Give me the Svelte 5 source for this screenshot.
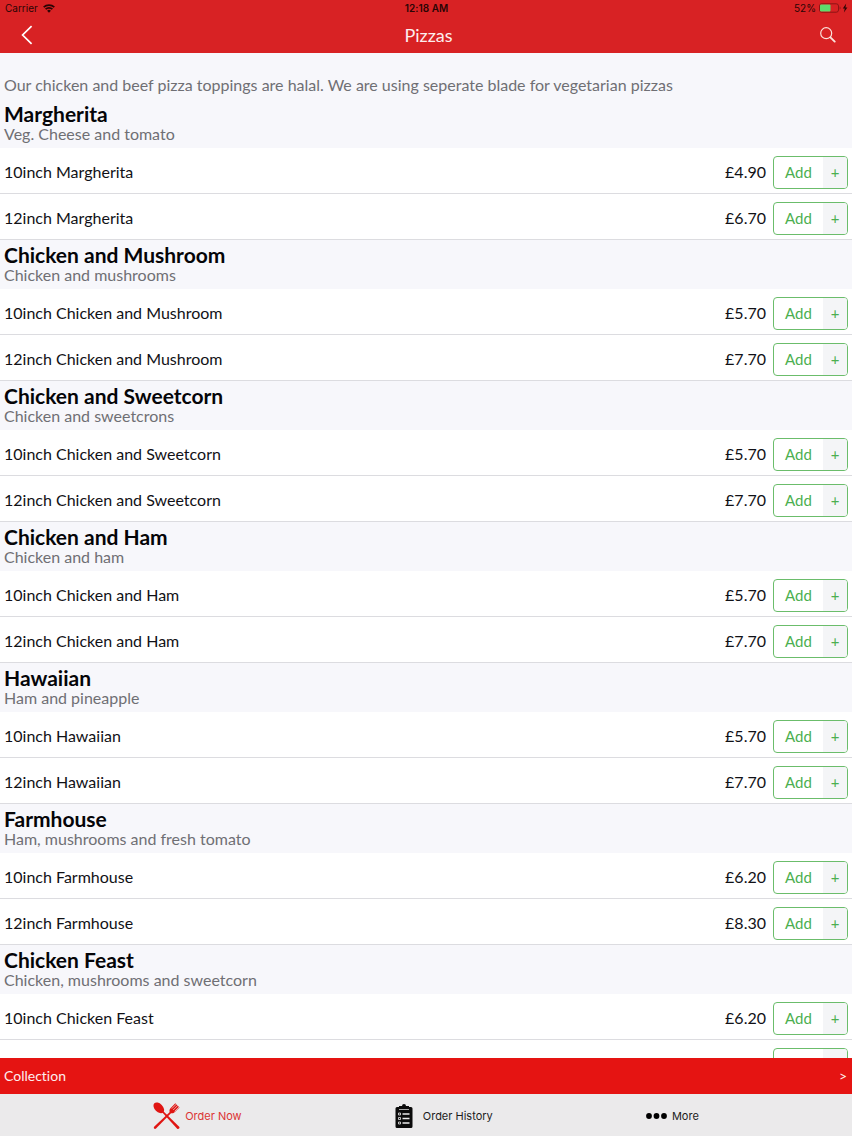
<script>
  const sections = [
    { name: 'Margherita', info: 'Veg. Cheese and tomato', small: '4.90', large: '6.70' },
    { name: 'Chicken and Mushroom', info: 'Chicken and mushrooms', small: '5.70', large: '7.70' },
    { name: 'Chicken and Sweetcorn', info: 'Chicken and sweetcrons', small: '5.70', large: '7.70' },
    { name: 'Chicken and Ham', info: 'Chicken and ham', small: '5.70', large: '7.70' },
    { name: 'Hawaiian', info: 'Ham and pineapple', small: '5.70', large: '7.70' },
    { name: 'Farmhouse', info: 'Ham, mushrooms and fresh tomato', small: '6.20', large: '8.30' },
    { name: 'Chicken Feast', info: 'Chicken, mushrooms and sweetcorn', small: '6.20', large: '8.30' }
  ];

  const sizes = [
    { label: '10inch', key: 'small' },
    { label: '12inch', key: 'large' }
  ];
</script>

<div class="screen">
  <header>
    <div class="status">
      <div class="carrier">
        <span>Carrier</span>
        <svg width="12" height="9" viewBox="0 0 12 9">
          <path d="M0.7 3.2a7.6 7.6 0 0 1 10.6 0M2.6 5.2a4.8 4.8 0 0 1 6.8 0" fill="none" stroke="#2a0505" stroke-width="1.7" />
          <path d="M6 8.8L4.1 6.8a2.7 2.7 0 0 1 3.8 0z" fill="#2a0505" />
        </svg>
      </div>
      <span class="time">12:18 AM</span>
      <div class="battery">
        <span>52%</span>
        <svg width="29" height="10" viewBox="0 0 29 10">
          <rect x="0.5" y="0.8" width="19" height="8.4" rx="2.2" fill="none" stroke="#8d1414" />
          <rect x="1" y="1.5" width="10.5" height="7" rx="1" fill="#5fdc6c" />
          <path d="M20.6 3.5v3a1.6 1.6 0 0 0 0-3z" fill="#8d1414" />
          <path d="M27.2 0.5L23.8 5.6h2L24.9 9.5 28.4 4.4h-2z" fill="#2a0505" />
        </svg>
      </div>
    </div>
    <nav class="title-bar">
      <button class="icon-btn" aria-label="Back">
        <svg width="12" height="20" viewBox="0 0 12 20">
          <path d="M10.6 1.2L1.6 10l9 8.8" fill="none" stroke="#fff" stroke-width="1.7" />
        </svg>
      </button>
      <h1>Pizzas</h1>
      <button class="icon-btn" aria-label="Search">
        <svg width="16" height="16" viewBox="0 0 16 16">
          <circle cx="6.2" cy="6.2" r="5.5" fill="none" stroke="#fbe3dc" stroke-width="1.2" />
          <path d="M10.4 10.4l4.3 4.2" fill="none" stroke="#fbe3dc" stroke-width="1.9" stroke-linecap="round" />
        </svg>
      </button>
    </nav>
  </header>

  <main>
    <p class="notice">Our chicken and beef pizza toppings are halal. We are using seperate blade for vegetarian pizzas</p>
    {#each sections as section}
      <section>
        <div class="heading">
          <h2>{section.name}</h2>
          <p>{section.info}</p>
        </div>
        <ul>
          {#each sizes as size}
            <li>
              <span class="name">{size.label} {section.name}</span>
              <span class="price">£{section[size.key]}</span>
              <button class="add">
                <span class="add-label">Add</span>
                <span class="plus">+</span>
              </button>
            </li>
          {/each}
        </ul>
      </section>
    {/each}
  </main>

  <button class="collection">
    <span>Collection</span>
    <span>&gt;</span>
  </button>

  <nav class="tabs">
    <a href="#order" class="active">
      <svg width="27" height="28" viewBox="0 0 27 28">
        <g fill="#e01512">
          <ellipse cx="5.8" cy="5.8" rx="6.3" ry="4.1" transform="rotate(45 5.8 5.8)" />
          <path d="M8.4 9.6L9.6 8.4 26.2 24.8c1 1.3-0.8 3-2 1.900z" />
          <path d="M17.600 9.300L18.700 10.400 3 26.600c-1.200 1.100-2.900-0.500-1.900-1.800z" />
          <path d="M17 10.800c-1-1.800-0.600-3.600 0.700-4.900L22.300 1.300l4.200 4.200-4.600 4.600c-1.300 1.300-3.200 1.700-4.900 0.700z" />
        </g>
        <path d="M23.500 1.900l-4.700 4.700M24.900 3.300l-4.700 4.700M26.300 4.700l-4.700 4.700" stroke="#ebeaeb" stroke-width="0.700" />
      </svg>
      <span>Order Now</span>
    </a>
    <a href="#history">
      <svg class="clipboard" width="18" height="26" viewBox="0 0 18 26">
        <path d="M2 4h2V3h3a2 2 0 0 1 4 0h3v1h2a1.5 1.5 0 0 1 1.5 1.5v18a1.5 1.5 0 0 1-1.5 1.5H2A1.5 1.5 0 0 1 0.5 23.500v-18A1.500 1.500 0 0 1 2 4z" fill="#0b0b0b" />
        <path d="M4 6.500h10" stroke="#ececec" stroke-width="0.700" />
        <path d="M7.500 11h7M7.500 15.500h7M7.500 20h7" stroke="#ececec" stroke-width="1.300" />
        <path d="M3.500 10h2v2h-2zM3.500 14.500h2v2h-2zM3.500 19h2v2h-2z" fill="none" stroke="#ececec" stroke-width="0.800" />
      </svg>
      <span>Order History</span>
    </a>
    <a href="#more">
      <svg width="21" height="6" viewBox="0 0 21 6">
        <circle cx="3" cy="3" r="2.900" />
        <circle cx="10.500" cy="3" r="2.900" />
        <circle cx="18" cy="3" r="2.900" />
      </svg>
      <span>More</span>
    </a>
  </nav>
</div>

<style>
  :global(body) {
    margin: 0;
  }

  .screen {
    display: flex;
    flex-direction: column;
    height: 100vh;
    font-family: Lato, "Open Sans", sans-serif;
    font-variant-ligatures: none;
    background: #fff;
    color: #111116;
  }

  h1, h2, p, ul {
    margin: 0;
    padding: 0;
  }

  svg {
    display: block;
    flex-shrink: 0;
  }

  button {
    margin: 0;
    padding: 0;
    border: 0;
    background: none;
    font-family: inherit;
    font-variant-ligatures: none;
    cursor: pointer;
  }

  header {
    flex-shrink: 0;
    background: #d82224;
  }

  .status {
    display: grid;
    grid-template-columns: 1fr auto 1fr;
    align-items: center;
    height: 16px;
    padding: 0 4px 0 5px;
    font-family: Inter, sans-serif;
    font-size: 10px;
    line-height: 16px;
    color: #2a0505;
  }

  .carrier, .battery {
    display: flex;
    align-items: center;
    gap: 5px;
  }

  .battery {
    justify-content: flex-end;
    gap: 3px;
  }

  .time {
    font-weight: 600;
  }

  .title-bar {
    display: flex;
    align-items: center;
    justify-content: space-between;
    height: 37px;
    padding: 0 16px 0 21px;
  }

  .icon-btn {
    display: flex;
    align-items: center;
    width: 16px;
    height: 32px;
  }

  h1 {
    font-size: 18px;
    line-height: 24px;
    font-weight: 400;
    color: #fdeeee;
  }

  main {
    flex: 1;
    min-height: 0;
    overflow-y: auto;
    scrollbar-width: none;
  }

  .notice {
    padding: 22px 4px 4px;
    background: #f7f7fb;
    font-size: 16px;
    line-height: 20px;
    color: #6f6f74;
  }

  .heading {
    padding: 4px 4px 5px;
    background: #f7f7fb;
  }

  h2 {
    font-size: 21px;
    line-height: 22px;
    font-weight: 700;
    color: #050508;
  }

  .heading p {
    font-size: 16px;
    line-height: 18px;
    color: #6f6f74;
  }

  ul {
    list-style: none;
  }

  li {
    display: flex;
    align-items: center;
    padding: 8px 4px 4px;
    border-bottom: 1px solid #dcdce0;
    font-size: 16px;
    line-height: 24px;
  }

  .name, .price {
    padding-bottom: 2px;
  }

  .name {
    flex: 1;
  }

  .price {
    margin-right: 7px;
  }

  .add {
    display: flex;
    box-sizing: border-box;
    width: 75px;
    height: 33px;
    border: 1px solid #6bbd6b;
    border-radius: 4px;
    overflow: hidden;
    background: #fff;
    font-size: 15px;
    line-height: 31px;
    color: #4caf50;
  }

  .add-label {
    flex: 1;
  }

  .plus {
    width: 24px;
    background: #f4f5f7;
  }

  .collection {
    display: flex;
    flex-shrink: 0;
    align-items: center;
    justify-content: space-between;
    height: 36px;
    padding: 0 5px 0 4px;
    background: #e51412;
    font-size: 14px;
    line-height: 20px;
    color: #fdeeee;
  }

  .tabs {
    display: flex;
    flex-shrink: 0;
    align-items: center;
    justify-content: space-evenly;
    height: 42px;
    padding-top: 2px;
    box-sizing: border-box;
    background: #ebeaeb;
    font-family: Inter, sans-serif;
    font-size: 11px;
    line-height: 16px;
  }

  .tabs a {
    display: flex;
    align-items: center;
    gap: 5px;
    color: #1c1c1c;
    text-decoration: none;
  }

  .tabs a.active {
    color: #dc3434;
  }

  .tabs .clipboard {
    margin-right: 5px;
  }
</style>
